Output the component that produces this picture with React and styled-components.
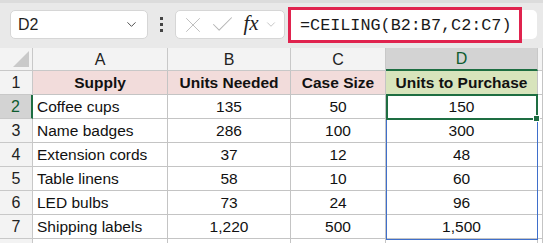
import React from 'react';
import styled, { createGlobalStyle } from 'styled-components';
import { ChevronDown, X, Check } from 'lucide-react';

const GlobalStyle = createGlobalStyle`
  html, body {
    margin: 0;
    padding: 0;
    background: #ffffff;
  }
  body {
    font-family: "Liberation Sans", Arial, sans-serif;
  }
`;

const Sheet = styled.div`
  width: 543px;
  height: 243px;
  overflow: hidden;
  background: #ffffff;
  display: flex;
  flex-direction: column;
`;

const Toolbar = styled.div`
  height: 48px;
  flex: none;
  background: #e9e9e9;
  border-top: 3px solid #dcdcdc;
  box-sizing: border-box;
  display: flex;
  align-items: center;
  padding-left: 10px;
`;

const NameBox = styled.div`
  width: 138px;
  height: 29px;
  box-sizing: border-box;
  background: #fff;
  border: 1px solid #d6d6d6;
  border-radius: 5px;
  display: flex;
  align-items: center;
  justify-content: space-between;
  padding: 0 8px 0 7px;
  font-size: 16px;
  color: #1f1f1f;
  margin-top: -2px;
`;

const Dots = styled.div`
  width: 27px;
  display: flex;
  flex-direction: column;
  align-items: center;
  gap: 3px;
  margin-top: -2px;

  span {
    width: 3px;
    height: 3px;
    background: #444;
  }
`;

const FxBox = styled.div`
  width: 110px;
  height: 29px;
  box-sizing: border-box;
  background: #fff;
  border: 1px solid #d6d6d6;
  border-radius: 5px;
  display: flex;
  align-items: center;
  padding-left: 4px;
  color: #b5b5b5;
  margin-top: -2px;
`;

const IconSlot = styled.span`
  width: ${({ $w }) => $w}px;
  display: flex;
  align-items: center;
  justify-content: center;
`;

const Fx = styled.span`
  font-family: "Liberation Serif", "Times New Roman", serif;
  font-style: italic;
  font-size: 21px;
  color: #222;
  width: 26px;
  text-align: center;
  margin-top: -3px;
`;

const FormulaBar = styled.div`
  flex: 1;
  height: 29px;
  margin: -2px 6px 0 3px;
  box-sizing: border-box;
  background: #fff;
  border-radius: 5px;
  display: flex;
  align-items: center;
`;

const Highlight = styled.div`
  width: 234px;
  height: 36px;
  flex: none;
  box-sizing: border-box;
  border: 3px solid #e0234e;
  background: #fff;
  display: flex;
  align-items: center;
  padding-left: 9px;
  font-family: "Liberation Mono", "Courier New", monospace;
  font-size: 16.8px;
  color: #1a1a1a;
  margin-top: 1px;
`;

const Grid = styled.div`
  display: grid;
  grid-template-columns: 33px 135px 123px 95px 152px 5px;
  grid-template-rows: 23px repeat(8, 24px);
  font-size: 15.5px;
  color: #111;
  position: relative;
`;

const Corner = styled.div`
  background: #f3f3f3;
  border-right: 1px solid #c8c8c8;
  border-bottom: 1px solid #c8c8c8;
  position: relative;

  &::after {
    content: '';
    position: absolute;
    right: 3px;
    bottom: 3px;
    width: 0;
    height: 0;
    border-left: 16px solid transparent;
    border-bottom: 16px solid #c9c9c9;
  }
`;

const ColHead = styled.div`
  background: ${({ $active }) => ($active ? '#d3d3d3' : '#f3f3f3')};
  color: ${({ $active }) => ($active ? '#0e5c2f' : '#222')};
  border-right: 1px solid #c8c8c8;
  border-bottom: ${({ $active }) => ($active ? '2px solid #1e6e42' : '1px solid #c8c8c8')};
  box-sizing: border-box;
  display: flex;
  align-items: center;
  justify-content: center;
  padding-top: 1px;
  font-size: 16px;
`;

const RowHead = styled.div`
  background: ${({ $active }) => ($active ? '#d3d3d3' : '#f3f3f3')};
  color: ${({ $active }) => ($active ? '#0e5c2f' : '#222')};
  border-right: ${({ $active }) => ($active ? '2px solid #1e6e42' : '1px solid #c8c8c8')};
  border-bottom: 1px solid #c8c8c8;
  box-sizing: border-box;
  display: flex;
  align-items: center;
  justify-content: center;
  font-size: 16px;
`;

const Cell = styled.div`
  background: ${({ $fill }) => $fill || '#fff'};
  font-weight: ${({ $bold }) => ($bold ? 700 : 400)};
  border-right: 1px solid #c4c4c4;
  border-bottom: 1px solid #c4c4c4;
  box-sizing: border-box;
  display: flex;
  align-items: center;
  justify-content: ${({ $left }) => ($left ? 'flex-start' : 'center')};
  padding-left: ${({ $left }) => ($left ? '4px' : '0')};
  white-space: nowrap;
  overflow: hidden;
`;

const RangeBox = styled.div`
  position: absolute;
  left: 386px;
  top: 47px;
  width: 152px;
  height: 145px;
  box-sizing: border-box;
  border: 1.5px solid #3f6fcb;
  pointer-events: none;
`;

const ActiveCell = styled.div`
  position: absolute;
  left: 386px;
  top: 46px;
  width: 152px;
  height: 26px;
  box-sizing: border-box;
  border: 2px solid #1e6e42;
  pointer-events: none;

  &::after {
    content: '';
    position: absolute;
    right: -4px;
    bottom: -4px;
    width: 5px;
    height: 5px;
    background: #1e6e42;
    border: 1px solid #fff;
  }
`;

const PINK = '#f2dcdb';
const GREEN = '#d8e4bc';

const rows = [
  ['Coffee cups', '135', '50', '150'],
  ['Name badges', '286', '100', '300'],
  ['Extension cords', '37', '12', '48'],
  ['Table linens', '58', '10', '60'],
  ['LED bulbs', '73', '24', '96'],
  ['Shipping labels', '1,220', '500', '1,500'],
];

export default function App() {
  return (
    <>
      <GlobalStyle />
      <Sheet>
        <Toolbar>
          <NameBox>
            D2
            <ChevronDown size={15} strokeWidth={1.5} color="#444" />
          </NameBox>
          <Dots>
            <span />
            <span />
            <span />
          </Dots>
          <FxBox>
            <IconSlot $w={26}>
              <X size={30} strokeWidth={0.8} />
            </IconSlot>
            <IconSlot $w={32}>
              <Check size={27} strokeWidth={0.9} />
            </IconSlot>
            <Fx>fx</Fx>
            <IconSlot $w={14}>
              <ChevronDown size={15} strokeWidth={1.3} />
            </IconSlot>
          </FxBox>
          <FormulaBar>
            <Highlight>=CEILING(B2:B7,C2:C7)</Highlight>
          </FormulaBar>
        </Toolbar>

        <Grid>
          <Corner />
          <ColHead>A</ColHead>
          <ColHead>B</ColHead>
          <ColHead>C</ColHead>
          <ColHead $active>D</ColHead>
          <ColHead />

          <RowHead>1</RowHead>
          <Cell $fill={PINK} $bold>Supply</Cell>
          <Cell $fill={PINK} $bold>Units Needed</Cell>
          <Cell $fill={PINK} $bold>Case Size</Cell>
          <Cell $fill={GREEN} $bold>Units to Purchase</Cell>
          <Cell />

          {rows.map((r, i) => (
            <React.Fragment key={r[0]}>
              <RowHead $active={i === 0}>{i + 2}</RowHead>
              <Cell $left>{r[0]}</Cell>
              <Cell>{r[1]}</Cell>
              <Cell>{r[2]}</Cell>
              <Cell>{r[3]}</Cell>
              <Cell />
            </React.Fragment>
          ))}

          <RowHead />
          <Cell />
          <Cell />
          <Cell />
          <Cell />
          <Cell />

          <RangeBox />
          <ActiveCell />
        </Grid>
      </Sheet>
    </>
  );
}
